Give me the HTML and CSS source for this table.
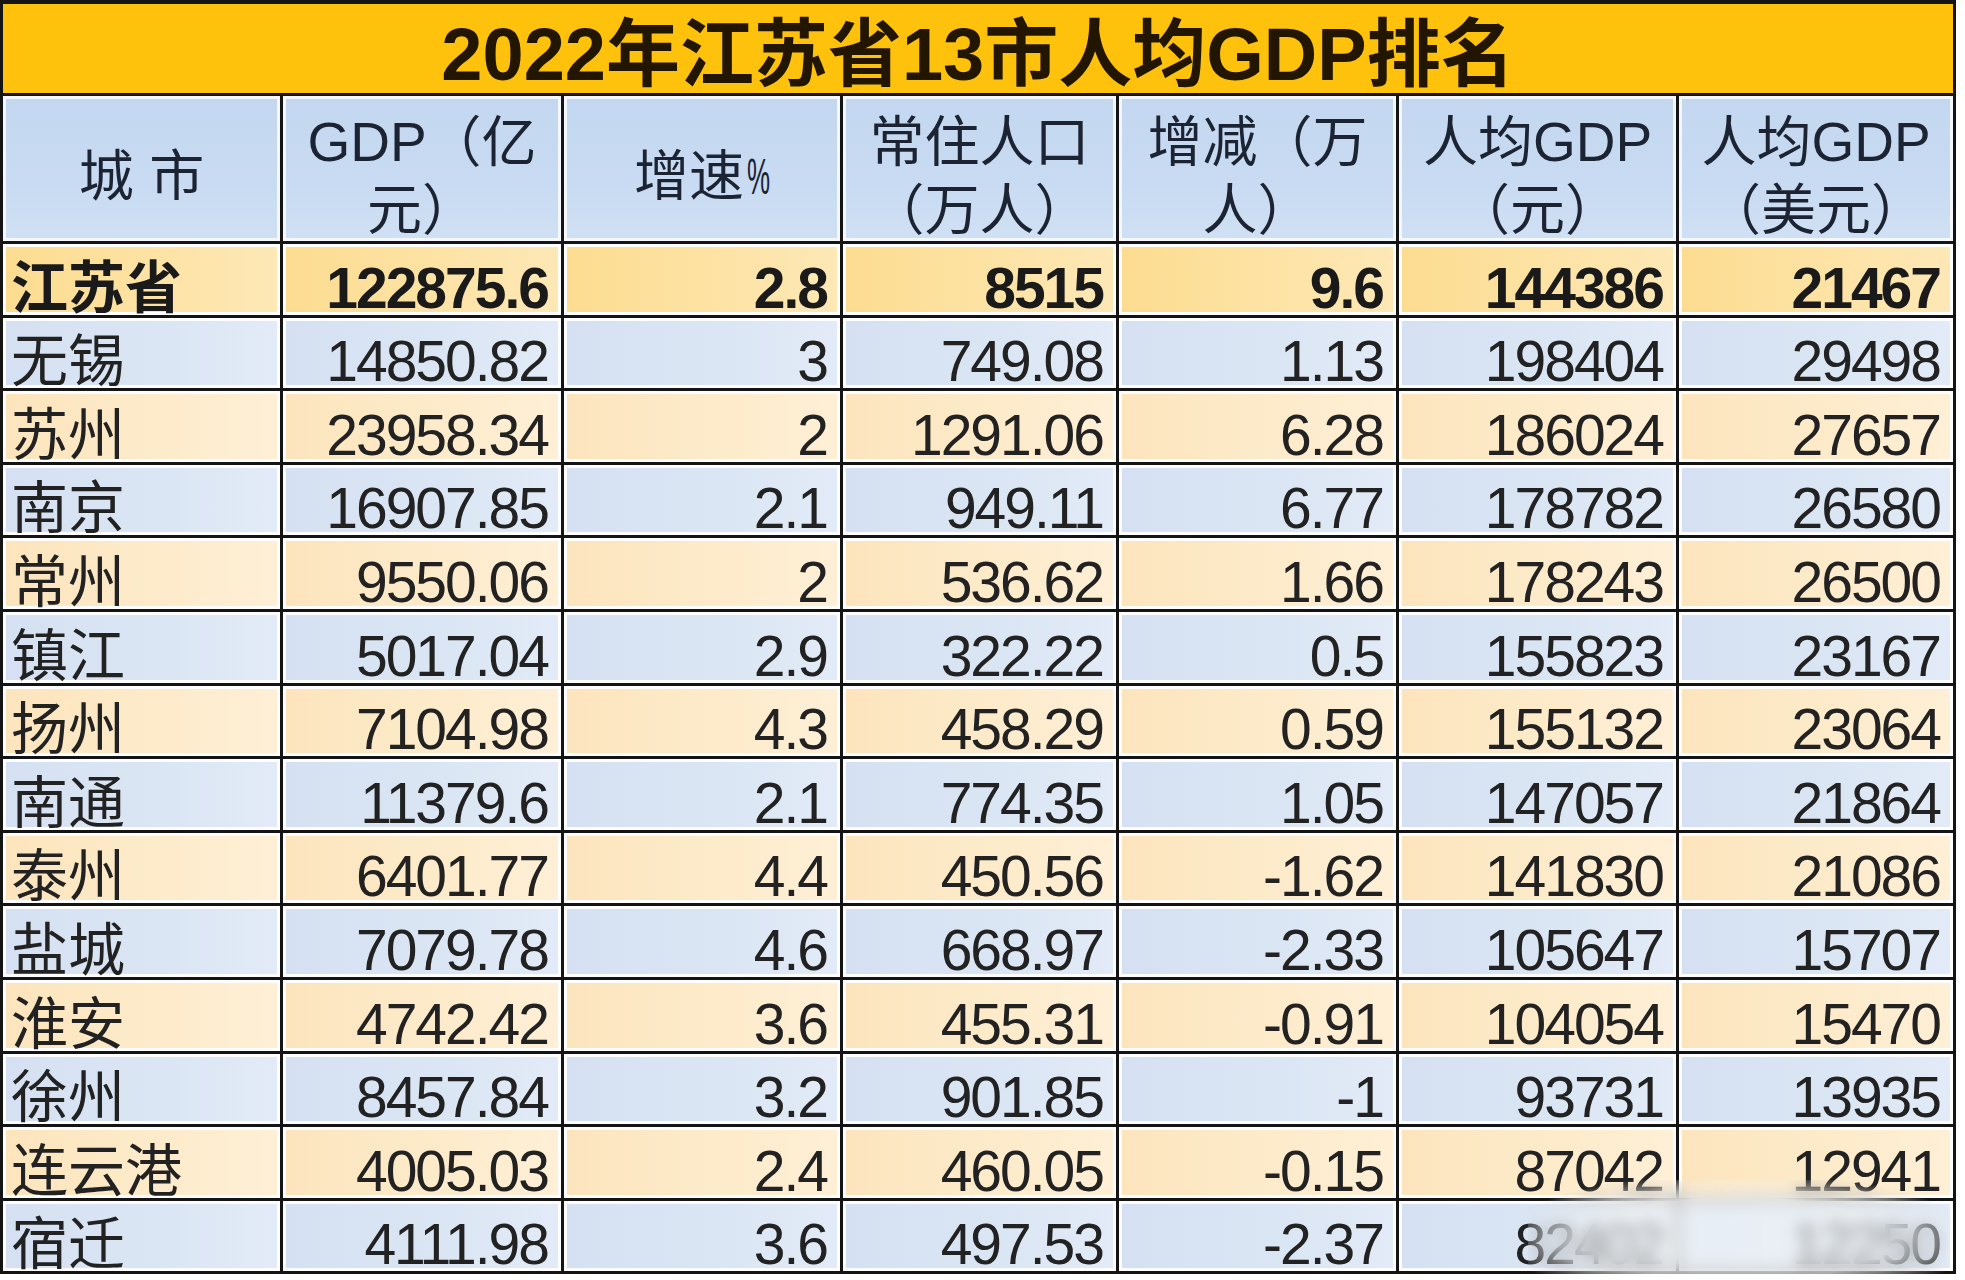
FILE: index.html
```html
<!DOCTYPE html>
<html lang="zh-CN">
<head>
<meta charset="utf-8">
<title>2022年江苏省13市人均GDP排名</title>
<link rel="stylesheet" href="styles.css">
</head>
<body>
<div class="sheet">
  <div class="title">2022年江苏省13市人均GDP排名</div>

  <div class="hd"><span>城 市</span></div>
  <div class="hd"><span>GDP（亿</span><span>元）</span></div>
  <div class="hd"><span>增速<span class="pct">%</span></span></div>
  <div class="hd"><span>常住人口</span><span>（万人）</span></div>
  <div class="hd"><span>增减（万</span><span>人）</span></div>
  <div class="hd"><span>人均GDP</span><span>（元）</span></div>
  <div class="hd"><span>人均GDP</span><span>（美元）</span></div>

  <div class="cell name prov">江苏省</div><div class="cell prov">122875.6</div><div class="cell prov">2.8</div><div class="cell prov">8515</div><div class="cell prov">9.6</div><div class="cell prov">144386</div><div class="cell prov">21467</div>

  <div class="cell name blu">无锡</div><div class="cell blu">14850.82</div><div class="cell blu">3</div><div class="cell blu">749.08</div><div class="cell blu">1.13</div><div class="cell blu">198404</div><div class="cell blu">29498</div>

  <div class="cell name yel">苏州</div><div class="cell yel">23958.34</div><div class="cell yel">2</div><div class="cell yel">1291.06</div><div class="cell yel">6.28</div><div class="cell yel">186024</div><div class="cell yel">27657</div>

  <div class="cell name blu">南京</div><div class="cell blu">16907.85</div><div class="cell blu">2.1</div><div class="cell blu">949.11</div><div class="cell blu">6.77</div><div class="cell blu">178782</div><div class="cell blu">26580</div>

  <div class="cell name yel">常州</div><div class="cell yel">9550.06</div><div class="cell yel">2</div><div class="cell yel">536.62</div><div class="cell yel">1.66</div><div class="cell yel">178243</div><div class="cell yel">26500</div>

  <div class="cell name blu thick">镇江</div><div class="cell blu thick">5017.04</div><div class="cell blu thick">2.9</div><div class="cell blu thick">322.22</div><div class="cell blu thick">0.5</div><div class="cell blu thick">155823</div><div class="cell blu thick">23167</div>

  <div class="cell name yel">扬州</div><div class="cell yel">7104.98</div><div class="cell yel">4.3</div><div class="cell yel">458.29</div><div class="cell yel">0.59</div><div class="cell yel">155132</div><div class="cell yel">23064</div>

  <div class="cell name blu">南通</div><div class="cell blu">11379.6</div><div class="cell blu">2.1</div><div class="cell blu">774.35</div><div class="cell blu">1.05</div><div class="cell blu">147057</div><div class="cell blu">21864</div>

  <div class="cell name yel">泰州</div><div class="cell yel">6401.77</div><div class="cell yel">4.4</div><div class="cell yel">450.56</div><div class="cell yel">-1.62</div><div class="cell yel">141830</div><div class="cell yel">21086</div>

  <div class="cell name blu">盐城</div><div class="cell blu">7079.78</div><div class="cell blu">4.6</div><div class="cell blu">668.97</div><div class="cell blu">-2.33</div><div class="cell blu">105647</div><div class="cell blu">15707</div>

  <div class="cell name yel">淮安</div><div class="cell yel">4742.42</div><div class="cell yel">3.6</div><div class="cell yel">455.31</div><div class="cell yel">-0.91</div><div class="cell yel">104054</div><div class="cell yel">15470</div>

  <div class="cell name blu">徐州</div><div class="cell blu">8457.84</div><div class="cell blu">3.2</div><div class="cell blu">901.85</div><div class="cell blu">-1</div><div class="cell blu">93731</div><div class="cell blu">13935</div>

  <div class="cell name yel">连云港</div><div class="cell yel">4005.03</div><div class="cell yel">2.4</div><div class="cell yel">460.05</div><div class="cell yel">-0.15</div><div class="cell yel">87042</div><div class="cell yel">12941</div>

  <div class="cell name blu">宿迁</div><div class="cell blu">4111.98</div><div class="cell blu">3.6</div><div class="cell blu">497.53</div><div class="cell blu">-2.37</div><div class="cell blu">82402</div><div class="cell blu">12250</div>

  <div class="smudge"></div>
</div>
</body>
</html>
```
FILE: styles.css
```css
html, body {
  margin: 0;
  padding: 0;
  background: #ffffff;
}

.sheet {
  position: relative;
  box-sizing: border-box;
  width: 1956px;
  border-style: solid;
  border-color: #141414;
  border-width: 4px 3px 3px 3px;
  background: #141414;
  display: grid;
  grid-template-columns: 277px 278px 276px 273px 277px 277px 274px;
  grid-template-rows: 89px 145px repeat(14, 70.6px);
  gap: 3px;
  font-family: "Liberation Sans", "Noto Sans CJK SC", sans-serif;
}

.title {
  grid-column: 1 / -1;
  box-sizing: border-box;
  background: #fec20c;
  color: #221600;
  text-align: center;
  font-weight: 700;
  font-size: 74px;
  line-height: 72px;
  padding-top: 15px;
  white-space: nowrap;
}

.hd {
  box-sizing: border-box;
  border: 3px solid #f4f8fd;
  padding-top: 14px;
  background: linear-gradient(180deg, #c3d7f0 0%, #c8dbf2 60%, #d0e0f4 100%);
  color: #1c2433;
  font-size: 55px;
  line-height: 68px;
  display: flex;
  flex-direction: column;
  justify-content: center;
  align-items: center;
  text-align: center;
  white-space: nowrap;
}

.pct {
  display: inline-block;
  font-size: 26px;
  line-height: 1;
  margin-left: 3px;
  transform: scaleY(1.9);
  transform-origin: 50% 90%;
}

.cell {
  box-sizing: border-box;
  border: 3px solid #fdfdfd;
  display: flex;
  align-items: flex-end;
  justify-content: flex-end;
  padding: 0 10px 2px 0;
  font-size: 57px;
  line-height: 44px;
  letter-spacing: -2px;
  color: #222222;
  white-space: nowrap;
}

.cell.name {
  justify-content: flex-start;
  padding-left: 5px;
  padding-right: 0;
  letter-spacing: 0;
}

.prov {
  font-weight: 700;
  color: #1a1a1a;
  background: linear-gradient(90deg, #fcdc90 0%, #fde3a6 60%, #fde8b6 100%);
}

.yel {
  background: linear-gradient(90deg, #fce5bd 0%, #fdebcb 60%, #feefd6 100%);
}

.blu {
  background: linear-gradient(90deg, #d5e1f2 0%, #dbe6f4 60%, #e2ebf7 100%);
}

.thick {
  box-shadow: 0 -3px 0 #141414;
}

.smudge {
  position: absolute;
  left: 1525px;
  top: 1176px;
  width: 420px;
  height: 96px;
  background: rgba(250, 250, 248, 0.5);
  -webkit-backdrop-filter: blur(8px);
  backdrop-filter: blur(8px);
  -webkit-mask-image: radial-gradient(ellipse at 50% 62%, #000 50%, transparent 80%);
  mask-image: radial-gradient(ellipse at 50% 62%, #000 50%, transparent 80%);
  pointer-events: none;
}
```
